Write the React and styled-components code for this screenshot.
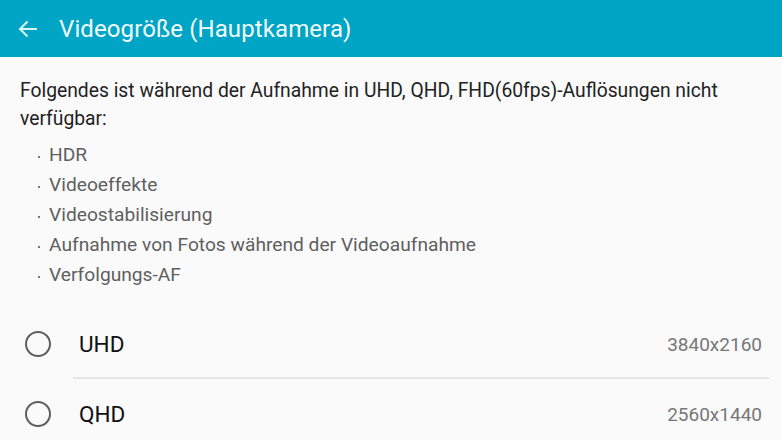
import React from "react";
import styled, { createGlobalStyle } from "styled-components";

const Global = createGlobalStyle`
  html, body { margin: 0; padding: 0; background: #fafafa; }
  body { font-family: Roboto, "Noto Sans", sans-serif; width: 782px; height: 440px; overflow: hidden; }
`;

const Page = styled.div`
  width: 782px;
  height: 440px;
  background: #fafafa;
  display: flex;
  flex-direction: column;
`;

const Header = styled.header`
  height: 57px;
  background: #00a4c5;
  display: flex;
  align-items: center;
  flex-shrink: 0;
`;

const BackButton = styled.div`
  width: 59px;
  display: flex;
  align-items: center;
  padding-left: 18px;
  box-sizing: border-box;
  color: #d9f6fb;
`;

const Title = styled.h1`
  margin: 0;
  font-size: 24px;
  font-weight: 400;
  color: #f2fbfd;
  letter-spacing: 0.1px;
`;

const Content = styled.div`
  padding: 20px 20px 0 20px;
`;

const Intro = styled.p`
  margin: 0;
  font-size: 19.3px;
  line-height: 28px;
  color: #222;
`;

const List = styled.ul`
  list-style: none;
  margin: 7px 0 0 0;
  padding: 0 0 0 18px;
`;

const Item = styled.li`
  font-size: 19.2px;
  line-height: 30px;
  color: #5f5f5f;
  display: flex;
  align-items: center;
  &::before {
    content: "";
    width: 2px;
    height: 2px;
    background: #777;
    margin-right: 9px;
    margin-top: 4px;
  }
`;

const Options = styled.div`
  margin-top: 19px;
  display: flex;
  flex-direction: column;
`;

const Option = styled.div`
  height: 70px;
  display: flex;
  align-items: center;
  padding: 0 20px 0 25px;
  position: relative;
  ${(p) =>
    p.$divider &&
    `&::after {
      content: "";
      position: absolute;
      left: 73px;
      right: 13px;
      bottom: 0;
      height: 2px;
      background: #e6e6e6;
    }`}
`;

const Radio = styled.span`
  width: 22px;
  height: 22px;
  border: 2px solid #5e5e5e;
  border-radius: 50%;
  flex-shrink: 0;
`;

const Label = styled.span`
  margin-left: 28px;
  font-size: 22.5px;
  color: #111;
  flex: 1;
`;

const Value = styled.span`
  font-size: 19px;
  color: #777;
`;

const features = [
  "HDR",
  "Videoeffekte",
  "Videostabilisierung",
  "Aufnahme von Fotos während der Videoaufnahme",
  "Verfolgungs-AF",
];

const sizes = [
  { label: "UHD", value: "3840x2160" },
  { label: "QHD", value: "2560x1440" },
];

export default function App() {
  return (
    <Page>
      <Global />
      <Header>
        <BackButton>
          <svg width="20" height="18" viewBox="0 0 20 18" fill="none">
            <path d="M19 9H2M9.5 1.5L2 9l7.5 7.5" stroke="currentColor" strokeWidth="2" />
          </svg>
        </BackButton>
        <Title>Videogröße (Hauptkamera)</Title>
      </Header>
      <Content>
        <Intro>
          Folgendes ist während der Aufnahme in UHD, QHD, FHD(60fps)-Auflösungen nicht verfügbar:
        </Intro>
        <List>
          {features.map((f) => (
            <Item key={f}>{f}</Item>
          ))}
        </List>
      </Content>
      <Options>
        {sizes.map((s, i) => (
          <Option key={s.label} $divider={i === 0}>
            <Radio />
            <Label>{s.label}</Label>
            <Value>{s.value}</Value>
          </Option>
        ))}
      </Options>
    </Page>
  );
}
